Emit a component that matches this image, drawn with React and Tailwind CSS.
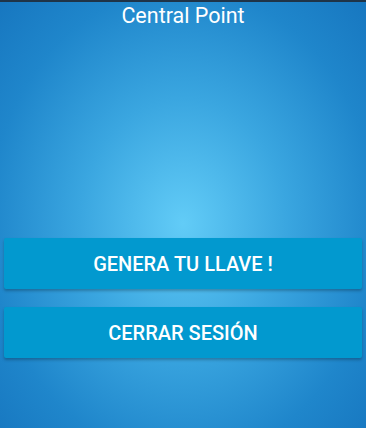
export default function App() {
  return (
    <div
      className="w-[366px] h-[428px] flex flex-col border-t-2 border-[#1f3448] bg-[radial-gradient(ellipse_at_50%_52%,#62ccf7_0%,#3aa6e0_40%,#1f86cb_75%,#1777c0_100%)]"
      style={{ fontFamily: 'Roboto, "Liberation Sans", sans-serif' }}
    >
      <h1 className="text-white text-[21.5px] leading-[28px] text-center">Central Point</h1>

      <div className="flex flex-col gap-[18px] px-[4px] mt-[208px]">
        <button className="h-[51px] w-full bg-[#0299cf] rounded-[2px] shadow-[0_2px_3px_rgba(0,0,0,0.25)] text-white text-[20px] font-medium">
          GENERA TU LLAVE !
        </button>
        <button className="h-[51px] w-full bg-[#0299cf] rounded-[2px] shadow-[0_2px_3px_rgba(0,0,0,0.25)] text-white text-[20px] font-medium">
          CERRAR SESIÓN
        </button>
      </div>
    </div>
  )
}
